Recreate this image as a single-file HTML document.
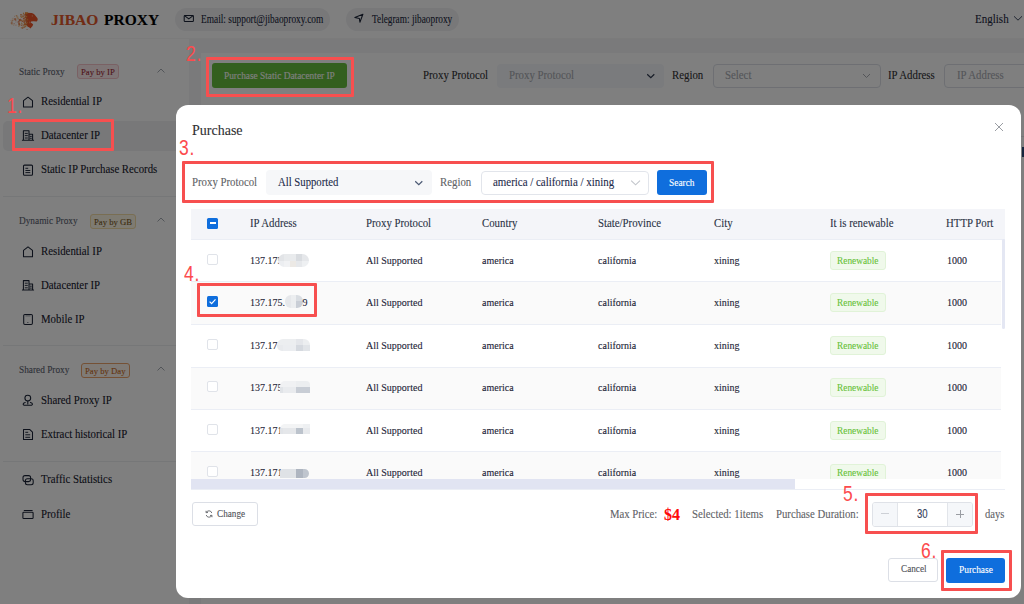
<!DOCTYPE html>
<html><head><meta charset="utf-8">
<style>
*{box-sizing:border-box;margin:0;padding:0}
html,body{width:1024px;height:604px;overflow:hidden;background:#fff;font-family:"Liberation Serif",serif;color:#1f2937}
.a,.item,.th,.td,.grp{-webkit-text-stroke:0.1px currentColor}
.a{position:absolute;white-space:nowrap;line-height:1}
#hdr{position:absolute;left:0;top:0;width:1024px;height:39px;background:#fff;border-bottom:1px solid #f6f6f6}
.pill{position:absolute;top:8px;height:23px;border-radius:12px;background:#f0f1f3}
#side{position:absolute;left:0;top:39px;width:189px;height:565px;background:#fff}
.grp{font-size:9.3px;color:#5b6270}
.badge{position:absolute;height:15px;border-radius:3px}
.item{left:41px;font-size:11.5px;color:#18202e;transform:scaleX(0.939);transform-origin:0 0}
.sep{position:absolute;left:3px;width:183px;height:1px;background:#eceef1}
.sic{position:absolute;left:21px}
#main{position:absolute;left:189px;top:39px;width:835px;height:565px;background:#f4f5f6}
#card{position:absolute;left:201px;top:53px;width:823px;height:551px;background:#fff}
#overlay{position:absolute;left:0;top:0;width:1024px;height:604px;background:rgba(0,0,0,0.5)}
#modal{position:absolute;left:176px;top:105px;width:845px;height:493px;background:#fff;border-radius:12px;overflow:hidden}
.red{position:absolute;border:3px solid #f74f4f;border-radius:1px}
.num{position:absolute;color:#fc4b4d;font-family:"Liberation Sans",sans-serif;font-size:21.6px;line-height:1;white-space:nowrap;transform:scaleX(0.81);transform-origin:0 0;letter-spacing:1px}
.th{font-size:11.5px;color:#2b3345;transform:scaleX(0.939);transform-origin:0 0}
.td{font-size:10px;color:#1c2436}
.row{position:absolute;left:15px;width:811px;height:43px;border-bottom:1px solid #ebeef5}
.cb{position:absolute;left:31px;width:11px;height:11px;border:1px solid #e0e3e9;border-radius:2px;background:#fff}
.tag{position:absolute;left:654px;width:56px;height:19px;background:#f0f9eb;border:1px solid #e1f3d8;border-radius:3px}
.blur{position:absolute;height:12px;border-radius:6px}
</style></head><body>
<div id="hdr">
  <div class="a" style="left:51px;top:12px;font-size:15.5px;font-weight:bold;color:#e2582a">JIBAO</div>
  <div class="a" style="left:104px;top:12px;font-size:15.5px;font-weight:bold;color:#000">PROXY</div>
  <div class="pill" style="left:175px;width:155px"></div>
  <div class="a" style="left:201px;top:14.4px;font-size:11.5px;transform:scaleX(0.8130);transform-origin:0 0;color:#1d2740">Email: support@jibaoproxy.com</div>
  <div class="pill" style="left:346px;width:113px"></div>
  <div class="a" style="left:372px;top:14.4px;font-size:11.5px;transform:scaleX(0.8087);transform-origin:0 0;color:#1d2740">Telegram: jibaoproxy</div>
  <div class="a" style="left:975px;top:13.6px;font-size:11.5px;transform:scaleX(0.957);transform-origin:0 0;color:#1d2740">English</div>
  <svg class="a" style="left:1013px;top:15px" width="10" height="7" viewBox="0 0 10 7"><path d="M1 1.3 L5 5.2 L9 1.3" fill="none" stroke="#2a3550" stroke-width="0.9"/></svg>
</div>

<div id="side">
  <div class="a grp" style="left:19px;top:29px">Static Proxy</div>
  <div class="badge" style="left:77px;top:25px;width:42px;background:#fdebed;border:1px solid #f5c2c8"></div>
  <div class="a" style="left:81px;top:29px;font-size:8.7px;color:#9e2a35">Pay by IP</div>
  <svg class="a" style="left:157px;top:29px" width="8" height="5" viewBox="0 0 8 5"><path d="M0.5 4.5 L4 1 L7.5 4.5" fill="none" stroke="#9aa0aa" stroke-width="0.9"/></svg>
  <div class="a item" style="top:57px">Residential IP</div>

  <div class="a" style="left:3px;top:82px;width:183px;height:30px;background:#f0f1f3;border-radius:5px"></div>
  <div class="a item" style="top:91px">Datacenter IP</div>
  <div class="a item" style="top:125px">Static IP Purchase Records</div>

  <div class="sep" style="top:157px"></div>
  <div class="a grp" style="left:19px;top:178px">Dynamic Proxy</div>
  <div class="badge" style="left:90px;top:175px;width:46px;background:#fdf6e4;border:1px solid #f3dca6"></div>
  <div class="a" style="left:94px;top:179px;font-size:8.7px;color:#7a5a1e">Pay by GB</div>
  <svg class="a" style="left:157px;top:178px" width="8" height="5" viewBox="0 0 8 5"><path d="M0.5 4.5 L4 1 L7.5 4.5" fill="none" stroke="#9aa0aa" stroke-width="0.9"/></svg>
  <div class="a item" style="top:207px">Residential IP</div>
  <div class="a item" style="top:241px">Datacenter IP</div>
  <div class="a item" style="top:275px">Mobile IP</div>

  <div class="sep" style="top:306px"></div>
  <div class="a grp" style="left:19px;top:327px">Shared Proxy</div>
  <div class="badge" style="left:81px;top:324px;width:49px;background:#fff7ef;border:1px solid #eba26a"></div>
  <div class="a" style="left:85px;top:328px;font-size:8.7px;color:#c86a22">Pay by Day</div>
  <svg class="a" style="left:157px;top:327px" width="8" height="5" viewBox="0 0 8 5"><path d="M0.5 4.5 L4 1 L7.5 4.5" fill="none" stroke="#9aa0aa" stroke-width="0.9"/></svg>
  <div class="a item" style="top:356px">Shared Proxy IP</div>
  <div class="a item" style="top:390px">Extract historical IP</div>

  <div class="sep" style="top:422px"></div>
  <div class="a item" style="top:435px">Traffic Statistics</div>
  <div class="a item" style="top:470px">Profile</div>
</div>

<div id="main"></div>
<div id="card">
  <div class="a" style="left:11px;top:10.4px;width:135px;height:24.6px;background:#66bf3c;border-radius:3px"></div>
  <div class="a" style="left:23px;top:19px;font-size:9.35px;color:#fff">Purchase Static Datacenter IP</div>
  <div class="a" style="left:222px;top:17.3px;font-size:11.5px;transform:scaleX(0.9391);transform-origin:0 0;color:#303133">Proxy Protocol</div>
  <div class="a" style="left:296px;top:11px;width:167px;height:24px;background:#f5f7fa;border-radius:4px"></div>
  <div class="a" style="left:308px;top:17.3px;font-size:11.5px;transform:scaleX(0.9391);transform-origin:0 0;color:#a8abb2">Proxy Protocol</div>
  <svg class="a" style="left:446px;top:20px" width="8" height="6" viewBox="0 0 8 6"><path d="M0.2 1.3 L3.8 4.7 L7.3 1.3" fill="none" stroke="#303a50" stroke-width="1.25"/></svg>
  <div class="a" style="left:471px;top:17.3px;font-size:11.5px;transform:scaleX(0.9391);transform-origin:0 0;color:#303133">Region</div>
  <div class="a" style="left:512px;top:11px;width:168px;height:24px;border:1px solid #dcdfe6;border-radius:4px"></div>
  <div class="a" style="left:524px;top:17.3px;font-size:11.5px;transform:scaleX(0.9391);transform-origin:0 0;color:#a8abb2">Select</div>
  <svg class="a" style="left:661px;top:20px" width="9" height="6" viewBox="0 0 9 6"><path d="M1 1 L4.5 4.5 L8 1" fill="none" stroke="#a8abb2" stroke-width="1"/></svg>
  <div class="a" style="left:687px;top:17.3px;font-size:11.5px;transform:scaleX(0.9391);transform-origin:0 0;color:#303133">IP Address</div>
  <div class="a" style="left:743px;top:11px;width:100px;height:24px;border:1px solid #dcdfe6;border-radius:4px"></div>
  <div class="a" style="left:820px;top:83px;width:4px;height:1px;background:#e6e8ec"></div>
  <div class="a" style="left:821px;top:94px;width:3px;height:10px;background:#2b4a7a"></div>
  <div class="a" style="left:756px;top:17.3px;font-size:11.5px;transform:scaleX(0.9391);transform-origin:0 0;color:#a8abb2">IP Address</div>
</div>


<svg class="a" style="left:0;top:0" width="400" height="604" viewBox="0 0 400 604">
 <g fill="none" stroke="#1a2336" stroke-width="1.05" stroke-linejoin="round" stroke-linecap="round">
  <!-- mail -->
  <rect x="184.2" y="15.4" width="9.2" height="6.1" rx="0.8"/>
  <path d="M184.8 15.8 L188.8 18.9 L192.8 15.8"/>
  <!-- telegram -->
  <path d="M362.9 14.3 L354.8 17.4 L359.4 18.5 L359.9 22.2 Z"/>
  <!-- house 1 -->
  <path d="M23.5 107 L23.5 100.6 L28 97.2 L32.5 100.6 L32.5 107 Z"/>
  <!-- building 1 -->
  <path d="M23.4 140.2 L23.4 130.8 L29 130.8 L29 140.2 M29 134.2 L32.6 134.2 L32.6 140.2 M22.4 140.2 L33.6 140.2"/>
  <path d="M25.2 133.4 L27.4 133.4 M25.2 135.6 L27.4 135.6 M25.2 138 L27.4 138 M30.1 136.4 L31.4 136.4 M30.1 138.3 L31.4 138.3" stroke-width="0.9"/>
  <!-- doc records -->
  <rect x="23.5" y="165.1" width="9" height="10.1" rx="1"/>
  <path d="M25.8 168.3 L27.8 168.3 M25.8 170.5 L29.9 170.5 M25.8 172.6 L29.9 172.6" stroke-width="0.95"/>
  <!-- house 2 -->
  <path d="M23.5 256.7 L23.5 250.3 L28 246.9 L32.5 250.3 L32.5 256.7 Z"/>
  <!-- building 2 -->
  <path d="M23.4 290 L23.4 280.6 L29 280.6 L29 290 M29 284 L32.6 284 L32.6 290 M22.4 290 L33.6 290"/>
  <path d="M25.2 283.2 L27.4 283.2 M25.2 285.4 L27.4 285.4 M25.2 287.8 L27.4 287.8 M30.1 286.2 L31.4 286.2 M30.1 288.1 L31.4 288.1" stroke-width="0.9"/>
  <!-- mobile -->
  <rect x="23.7" y="314.4" width="8.7" height="10" rx="1.2"/>
  <path d="M25.8 315.9 L30.2 315.9" stroke-width="0.8" opacity="0.6"/>
  <circle cx="27.9" cy="322.4" r="0.5" fill="#1a2336" stroke="none"/>
  <!-- person pin -->
  <circle cx="27.8" cy="398.1" r="2.9"/>
  <path d="M27.8 401 L27.8 404"/>
  <path d="M25.2 402.4 C22.5 402.9 22.6 405.2 24.8 405.3 L30.8 405.3 C33 405.2 33.1 402.9 30.4 402.4"/>
  <!-- doc fold -->
  <path d="M23.5 429.4 L29.6 429.4 L32.5 432.2 L32.5 439.4 L23.5 439.4 Z"/>
  <path d="M25.7 432.3 L27.8 432.3 M25.7 434.8 L29.8 434.8 M25.7 437.3 L29.8 437.3" stroke-width="0.95"/>
  <!-- traffic -->
  <rect x="23" y="475.6" width="7.6" height="6" rx="2"/>
  <rect x="25.4" y="478.7" width="7.8" height="6" rx="2"/>
  <!-- profile -->
  <path d="M24.2 510.4 L32.2 510.4"/>
  <rect x="22.9" y="512.3" width="10.2" height="6.2" rx="0.8"/>
 </g>
 <!-- tiger -->
 <g transform="translate(10 8)">
  <path d="M15.2 4.8 L21.9 5.0 C23.5 5.6 24.6 6.5 25.3 7.6 L27.5 10.3 L27.7 11.9 L26.7 13.4 L23.5 13.2 L21 13.6 L20.6 14.6 L22.2 15.6 L23.2 16.6 L22.4 18.2 L21.2 19.6 L20.6 20.4 L19.4 19.6 L17.9 18.7 L16.6 17.4 L17 16 L15.8 14.8 L16.6 13.4 L15.4 12.2 L16.2 10.6 L15 9.2 L15.9 7.8 L14.8 6.4 Z" fill="#ec5428"/>
  <circle cx="22.3" cy="7.9" r="0.6" fill="#f5b090"/>
  <path d="M19.5 13.6 L19.7 15.4" stroke="#f5b090" stroke-width="0.6"/>
  <rect x="15.7" y="12.3" width="1.7" height="1.7" fill="#e8733a" opacity="0.85"/>
  <rect x="11.8" y="19.3" width="1.5" height="1.5" fill="#e8733a" opacity="0.72"/>
  <rect x="1.1" y="15.1" width="1.7" height="1.7" fill="#f0923c" opacity="0.34"/>
  <rect x="13.2" y="13.6" width="1.1" height="1.1" fill="#e8733a" opacity="0.77"/>
  <rect x="10.9" y="14.5" width="1.5" height="1.5" fill="#f2a44c" opacity="0.68"/>
  <rect x="15.8" y="8.0" width="1.1" height="1.1" fill="#f2a44c" opacity="0.86"/>
  <rect x="1.8" y="10.5" width="0.9" height="0.9" fill="#f0923c" opacity="0.36"/>
  <rect x="14.4" y="7.5" width="0.9" height="0.9" fill="#e4622e" opacity="0.81"/>
  <rect x="5.7" y="7.0" width="1.5" height="1.5" fill="#f0923c" opacity="0.50"/>
  <rect x="16.7" y="10.8" width="1.5" height="1.5" fill="#f0923c" opacity="0.89"/>
  <rect x="16.6" y="21.0" width="0.9" height="0.9" fill="#e8733a" opacity="0.88"/>
  <rect x="10.2" y="6.0" width="1.1" height="1.1" fill="#e8733a" opacity="0.66"/>
  <rect x="7.5" y="13.5" width="1.3" height="1.3" fill="#e4622e" opacity="0.56"/>
  <rect x="1.2" y="12.8" width="1.1" height="1.1" fill="#f0923c" opacity="0.34"/>
  <rect x="10.2" y="11.6" width="1.7" height="1.7" fill="#e4622e" opacity="0.66"/>
  <rect x="14.2" y="10.4" width="1.1" height="1.1" fill="#f2a44c" opacity="0.80"/>
  <rect x="15.4" y="7.9" width="1.1" height="1.1" fill="#e8733a" opacity="0.85"/>
  <rect x="15.0" y="10.9" width="0.9" height="0.9" fill="#f0923c" opacity="0.83"/>
  <rect x="10.1" y="7.8" width="0.9" height="0.9" fill="#e8733a" opacity="0.66"/>
  <rect x="14.5" y="8.6" width="1.1" height="1.1" fill="#f0923c" opacity="0.81"/>
  <rect x="4.2" y="10.1" width="1.7" height="1.7" fill="#e8733a" opacity="0.45"/>
  <rect x="1.6" y="11.8" width="1.3" height="1.3" fill="#e8733a" opacity="0.36"/>
  <rect x="8.1" y="9.9" width="0.9" height="0.9" fill="#f0923c" opacity="0.58"/>
  <rect x="10.2" y="6.3" width="1.3" height="1.3" fill="#f2a44c" opacity="0.66"/>
  <rect x="2.3" y="11.8" width="1.3" height="1.3" fill="#f0923c" opacity="0.38"/>
  <rect x="15.3" y="15.6" width="1.3" height="1.3" fill="#f2a44c" opacity="0.84"/>
  <rect x="16.1" y="12.2" width="0.9" height="0.9" fill="#e4622e" opacity="0.87"/>
  <rect x="6.4" y="7.4" width="0.9" height="0.9" fill="#f0923c" opacity="0.53"/>
  <rect x="16.9" y="16.3" width="1.5" height="1.5" fill="#e4622e" opacity="0.90"/>
  <rect x="8.2" y="14.6" width="1.5" height="1.5" fill="#e4622e" opacity="0.59"/>
  <rect x="4.3" y="10.2" width="1.7" height="1.7" fill="#e8733a" opacity="0.45"/>
  <rect x="8.5" y="11.0" width="1.3" height="1.3" fill="#e8733a" opacity="0.60"/>
  <rect x="12.8" y="7.8" width="1.1" height="1.1" fill="#f2a44c" opacity="0.75"/>
  <rect x="3.6" y="10.8" width="0.9" height="0.9" fill="#f0923c" opacity="0.43"/>
  <rect x="16.2" y="6.4" width="1.5" height="1.5" fill="#e4622e" opacity="0.87"/>
  <rect x="4.7" y="11.3" width="1.7" height="1.7" fill="#e4622e" opacity="0.47"/>
  <rect x="14.3" y="9.3" width="0.9" height="0.9" fill="#f2a44c" opacity="0.81"/>
  <rect x="14.8" y="15.7" width="1.7" height="1.7" fill="#f2a44c" opacity="0.82"/>
  <rect x="0.3" y="11.9" width="0.9" height="0.9" fill="#f2a44c" opacity="0.31"/>
  <rect x="4.0" y="7.8" width="0.9" height="0.9" fill="#e4622e" opacity="0.44"/>
  <rect x="10.9" y="6.3" width="1.1" height="1.1" fill="#e8733a" opacity="0.68"/>
  <rect x="14.0" y="15.6" width="1.5" height="1.5" fill="#f0923c" opacity="0.79"/>
  <rect x="12.9" y="16.7" width="1.1" height="1.1" fill="#f0923c" opacity="0.75"/>
  <rect x="11.1" y="16.7" width="1.3" height="1.3" fill="#e4622e" opacity="0.69"/>
  <rect x="6.6" y="10.1" width="1.3" height="1.3" fill="#f2a44c" opacity="0.53"/>
  <rect x="15.5" y="9.6" width="0.9" height="0.9" fill="#f0923c" opacity="0.85"/>
  <rect x="13.1" y="4.9" width="0.9" height="0.9" fill="#e4622e" opacity="0.76"/>
  <rect x="13.6" y="9.6" width="1.1" height="1.1" fill="#e4622e" opacity="0.78"/>
  <rect x="9.0" y="15.1" width="1.1" height="1.1" fill="#f2a44c" opacity="0.62"/>
  <rect x="16.5" y="13.5" width="1.1" height="1.1" fill="#e4622e" opacity="0.88"/>
  <rect x="9.1" y="13.6" width="0.9" height="0.9" fill="#f0923c" opacity="0.62"/>
  <rect x="8.8" y="16.0" width="1.7" height="1.7" fill="#f0923c" opacity="0.61"/>
  <rect x="15.7" y="11.7" width="1.1" height="1.1" fill="#f2a44c" opacity="0.85"/>
  <rect x="15.3" y="9.1" width="1.1" height="1.1" fill="#e4622e" opacity="0.84"/>
  <rect x="5.5" y="13.5" width="0.9" height="0.9" fill="#e4622e" opacity="0.49"/>
  <rect x="12.4" y="12.4" width="1.3" height="1.3" fill="#e8733a" opacity="0.74"/>
  <rect x="14.0" y="12.8" width="1.7" height="1.7" fill="#e8733a" opacity="0.80"/>
  <rect x="5.4" y="16.6" width="1.1" height="1.1" fill="#e8733a" opacity="0.49"/>
  <rect x="15.1" y="7.8" width="0.9" height="0.9" fill="#f2a44c" opacity="0.83"/>
  <rect x="16.0" y="15.8" width="1.1" height="1.1" fill="#e4622e" opacity="0.86"/>
  <rect x="10.8" y="19.2" width="1.1" height="1.1" fill="#f0923c" opacity="0.68"/>
  <rect x="8.2" y="15.4" width="1.7" height="1.7" fill="#e4622e" opacity="0.59"/>
  <rect x="2.5" y="9.7" width="1.1" height="1.1" fill="#f2a44c" opacity="0.39"/>
  <rect x="15.8" y="4.7" width="1.5" height="1.5" fill="#f0923c" opacity="0.86"/>
  <rect x="13.0" y="11.7" width="1.7" height="1.7" fill="#f2a44c" opacity="0.76"/>
  <rect x="14.4" y="11.5" width="1.3" height="1.3" fill="#e4622e" opacity="0.81"/>
  <rect x="15.7" y="5.3" width="0.9" height="0.9" fill="#f2a44c" opacity="0.85"/>
  <rect x="15.2" y="15.6" width="1.5" height="1.5" fill="#e8733a" opacity="0.84"/>
  <rect x="13.7" y="18.7" width="1.1" height="1.1" fill="#e4622e" opacity="0.78"/>
  <rect x="9.2" y="11.3" width="1.1" height="1.1" fill="#e4622e" opacity="0.62"/>
  <rect x="3.5" y="15.0" width="1.3" height="1.3" fill="#e4622e" opacity="0.42"/>
  <rect x="16.8" y="4.1" width="1.3" height="1.3" fill="#f2a44c" opacity="0.89"/>
  <rect x="9.7" y="10.7" width="1.5" height="1.5" fill="#e8733a" opacity="0.64"/>
  <rect x="16.7" y="14.3" width="1.1" height="1.1" fill="#f2a44c" opacity="0.89"/>
  <rect x="12.9" y="4.7" width="1.3" height="1.3" fill="#f2a44c" opacity="0.76"/>
  <rect x="9.2" y="12.5" width="0.9" height="0.9" fill="#e4622e" opacity="0.62"/>
  <rect x="13.8" y="13.8" width="0.9" height="0.9" fill="#e4622e" opacity="0.79"/>
  <rect x="15.8" y="11.7" width="1.1" height="1.1" fill="#e4622e" opacity="0.86"/>
  <rect x="8.2" y="17.5" width="1.3" height="1.3" fill="#f0923c" opacity="0.59"/>
  <rect x="0.7" y="14.1" width="1.5" height="1.5" fill="#f0923c" opacity="0.33"/>
  <rect x="15.3" y="4.6" width="1.3" height="1.3" fill="#f0923c" opacity="0.84"/>
  <rect x="13.6" y="15.7" width="1.3" height="1.3" fill="#e8733a" opacity="0.78"/>
  <rect x="0.8" y="14.5" width="1.5" height="1.5" fill="#e8733a" opacity="0.33"/>
  <rect x="16.6" y="14.0" width="0.9" height="0.9" fill="#f0923c" opacity="0.89"/>
  <rect x="10.6" y="8.1" width="0.9" height="0.9" fill="#f2a44c" opacity="0.67"/>
  <rect x="9.0" y="11.5" width="1.5" height="1.5" fill="#e4622e" opacity="0.62"/>
  <rect x="11.6" y="15.7" width="1.1" height="1.1" fill="#f2a44c" opacity="0.71"/>
  <rect x="12.5" y="6.4" width="1.3" height="1.3" fill="#f2a44c" opacity="0.74"/>
  <rect x="12.3" y="7.6" width="1.3" height="1.3" fill="#e8733a" opacity="0.74"/>
  <rect x="3.2" y="16.6" width="1.1" height="1.1" fill="#f0923c" opacity="0.41"/>
  <rect x="10.7" y="8.9" width="0.9" height="0.9" fill="#f0923c" opacity="0.68"/>
  <rect x="1.2" y="13.6" width="1.7" height="1.7" fill="#e8733a" opacity="0.34"/>
  <rect x="10.7" y="11.9" width="1.1" height="1.1" fill="#f2a44c" opacity="0.68"/>
  <rect x="14.3" y="6.0" width="1.7" height="1.7" fill="#e8733a" opacity="0.80"/>
  <rect x="6.6" y="8.3" width="1.7" height="1.7" fill="#f2a44c" opacity="0.53"/>
  <rect x="14.0" y="14.7" width="1.7" height="1.7" fill="#f0923c" opacity="0.80"/>
  <rect x="7.9" y="12.7" width="1.5" height="1.5" fill="#e4622e" opacity="0.58"/>
  <rect x="13.9" y="17.4" width="0.9" height="0.9" fill="#f0923c" opacity="0.79"/>
  <rect x="11.7" y="12.6" width="1.3" height="1.3" fill="#e4622e" opacity="0.71"/>
  <rect x="15.9" y="7.9" width="1.3" height="1.3" fill="#f2a44c" opacity="0.86"/>
  <rect x="12.6" y="10.5" width="1.1" height="1.1" fill="#e8733a" opacity="0.74"/>
  <rect x="15.0" y="4.2" width="1.7" height="1.7" fill="#f0923c" opacity="0.83"/>
  <rect x="16.4" y="17.6" width="0.9" height="0.9" fill="#f2a44c" opacity="0.88"/>
  <rect x="13.4" y="5.6" width="0.9" height="0.9" fill="#f2a44c" opacity="0.77"/>
  <rect x="11.0" y="8.2" width="1.7" height="1.7" fill="#f2a44c" opacity="0.69"/>
  <rect x="13.0" y="9.7" width="1.3" height="1.3" fill="#e8733a" opacity="0.76"/>
  <rect x="12.3" y="18.4" width="1.5" height="1.5" fill="#f2a44c" opacity="0.73"/>
  <rect x="14.5" y="17.7" width="1.5" height="1.5" fill="#f0923c" opacity="0.81"/>
 </g>
</svg>

<div id="overlay"></div>

<div id="modal">
  <div class="a" style="left:16px;top:19px;font-size:14px;color:#303133">Purchase</div>
  <svg class="a" style="left:818px;top:17px" width="10" height="10" viewBox="0 0 10 10"><path d="M1 1 L9 9 M9 1 L1 9" stroke="#9a9da3" stroke-width="1"/></svg>

  <div class="a" style="left:16px;top:72.4px;font-size:11.5px;transform:scaleX(0.9391);transform-origin:0 0;color:#606266">Proxy Protocol</div>
  <div class="a" style="left:90px;top:65px;width:166px;height:25px;background:#f6f7f9;border-radius:4px"></div>
  <div class="a" style="left:102px;top:72.4px;font-size:11.5px;transform:scaleX(0.9304);transform-origin:0 0;color:#1c2a4a">All Supported</div>
  <svg class="a" style="left:239px;top:75px" width="8" height="6" viewBox="0 0 8 6"><path d="M0.2 1.3 L3.8 4.7 L7.3 1.3" fill="none" stroke="#4d5b75" stroke-width="1.25"/></svg>
  <div class="a" style="left:264px;top:72.4px;font-size:11.5px;transform:scaleX(0.9391);transform-origin:0 0;color:#606266">Region</div>
  <div class="a" style="left:305px;top:65.5px;width:168px;height:24px;border:1px solid #e2e5eb;border-radius:4px"></div>
  <div class="a" style="left:317px;top:72.4px;font-size:11.5px;transform:scaleX(0.948);transform-origin:0 0;color:#1c2a4a">america / california / xining</div>
  <svg class="a" style="left:455px;top:75px" width="10" height="6" viewBox="0 0 10 6"><path d="M0.2 0.6 L4.6 4.8 L9 0.6" fill="none" stroke="#c3c6cc" stroke-width="1.1"/></svg>
  <div class="a" style="left:481px;top:65px;width:50px;height:25px;background:#0f6edd;border-radius:3px"></div>
  <div class="a" style="left:493px;top:73.7px;font-size:9.4px;color:#fff">Search</div>

  <!-- table -->
  <div class="a" style="left:15px;top:104px;width:814px;height:31px;background:#f4f5f9;border-bottom:1px solid #ebeef5"></div>
  <div class="a" style="left:31px;top:112.5px;width:11px;height:11px;background:#0f6edd;border-radius:1.5px"></div>
  <div class="a" style="left:33.5px;top:117.3px;width:6px;height:1.6px;background:#fff"></div>
  <div class="a th" style="left:74px;top:112.9px">IP Address</div>
  <div class="a th" style="left:190px;top:112.9px">Proxy Protocol</div>
  <div class="a th" style="left:306px;top:112.9px">Country</div>
  <div class="a th" style="left:422px;top:112.9px">State/Province</div>
  <div class="a th" style="left:538px;top:112.9px">City</div>
  <div class="a th" style="left:654px;top:112.9px">It is renewable</div>
  <div class="a th" style="left:770px;top:112.9px">HTTP Port</div>

  <!--ROWS--><div class="a" style="left:0;top:0;width:845px;height:374.4px;overflow:hidden">
<div class="a" style="left:15px;top:135.0px;width:810px;height:42.0px;background:#fff;border-bottom:1px solid #ebeef5"></div>
<div class="cb" style="top:148.9px"></div>
<div class="a td" style="left:74px;top:151.0px">137.175</div>
<div class="blur" style="left:102.3px;top:149.0px;width:30.3px;height:13.0px;border-radius:6.5px;overflow:hidden"><i style="position:absolute;left:0px;top:0px;width:6px;height:6.5px;background:#e2e4e7"></i><i style="position:absolute;left:6px;top:0px;width:6px;height:6.5px;background:#e8eaec"></i><i style="position:absolute;left:12px;top:0px;width:6px;height:6.5px;background:#e9ebed"></i><i style="position:absolute;left:18px;top:0px;width:6px;height:6.5px;background:#d9dce0"></i><i style="position:absolute;left:24px;top:0px;width:7px;height:6.5px;background:#e5e7ea"></i><i style="position:absolute;left:0px;top:6.5px;width:6px;height:6.5px;background:#eceef1"></i><i style="position:absolute;left:6px;top:6.5px;width:6px;height:6.5px;background:#f1f2f4"></i><i style="position:absolute;left:12px;top:6.5px;width:6px;height:6.5px;background:#ece9e5"></i><i style="position:absolute;left:18px;top:6.5px;width:6px;height:6.5px;background:#e6e8eb"></i><i style="position:absolute;left:24px;top:6.5px;width:7px;height:6.5px;background:#eef0f2"></i></div>
<div class="a td" style="left:190px;top:151.0px">All Supported</div>
<div class="a td" style="left:306px;top:151.0px">america</div>
<div class="a td" style="left:422px;top:151.0px">california</div>
<div class="a td" style="left:538px;top:151.0px">xining</div>
<div class="tag" style="top:146.1px"></div>
<div class="a" style="left:661px;top:152.0px;font-size:9.35px;color:#67c23a">Renewable</div>
<div class="a td" style="left:771px;top:151.0px">1000</div>
<div class="a" style="left:15px;top:177.0px;width:810px;height:43.0px;background:#fafafa;border-bottom:1px solid #ebeef5"></div>
<div class="a" style="left:31px;top:191.1px;width:11px;height:11px;background:#0f6edd;border-radius:1.5px"></div>
<svg class="a" style="left:31px;top:191.1px" width="11" height="11" viewBox="0 0 11 11"><path d="M2.6 5.6 L4.6 7.6 L8.5 3.4" fill="none" stroke="#fff" stroke-width="1.2"/></svg>
<div class="a td" style="left:74px;top:193.2px">137.175.</div>
<div class="blur" style="left:109.2px;top:190.2px;width:17.4px;height:12.4px;border-radius:6px;overflow:hidden"><i style="position:absolute;left:0px;top:0px;width:6px;height:12.4px;background:#e6e8eb"></i><i style="position:absolute;left:6px;top:0px;width:5px;height:12.4px;background:#eceef0"></i><i style="position:absolute;left:11px;top:0px;width:6.399999999999999px;height:6px;background:#d9dde2"></i><i style="position:absolute;left:11px;top:6px;width:6.399999999999999px;height:6.4px;background:#c9ced6"></i></div>
<div class="a td" style="left:126.5px;top:193.2px">9</div>
<div class="a td" style="left:190px;top:193.2px">All Supported</div>
<div class="a td" style="left:306px;top:193.2px">america</div>
<div class="a td" style="left:422px;top:193.2px">california</div>
<div class="a td" style="left:538px;top:193.2px">xining</div>
<div class="tag" style="top:188.3px"></div>
<div class="a" style="left:661px;top:194.2px;font-size:9.35px;color:#67c23a">Renewable</div>
<div class="a td" style="left:771px;top:193.2px">1000</div>
<div class="a" style="left:15px;top:220.0px;width:810px;height:43.0px;background:#fff;border-bottom:1px solid #ebeef5"></div>
<div class="cb" style="top:233.8px"></div>
<div class="a td" style="left:74px;top:235.9px">137.17</div>
<div class="blur" style="left:101.4px;top:234.0px;width:32.3px;height:11.9px;border-radius:6px 6px 0 5px;overflow:hidden"><i style="position:absolute;left:0px;top:0px;width:19px;height:6px;background:#eceef0"></i><i style="position:absolute;left:19px;top:0px;width:7px;height:6px;background:#e4e6ea"></i><i style="position:absolute;left:26px;top:0px;width:7px;height:6px;background:#eceef0"></i><i style="position:absolute;left:0px;top:6px;width:6px;height:6px;background:#e8eaed"></i><i style="position:absolute;left:6px;top:6px;width:13px;height:6px;background:#ebedf0"></i><i style="position:absolute;left:19px;top:6px;width:7px;height:6px;background:#d5d9df"></i><i style="position:absolute;left:26px;top:6px;width:7px;height:6px;background:#e1e4e8"></i></div>
<div class="a td" style="left:190px;top:235.9px">All Supported</div>
<div class="a td" style="left:306px;top:235.9px">america</div>
<div class="a td" style="left:422px;top:235.9px">california</div>
<div class="a td" style="left:538px;top:235.9px">xining</div>
<div class="tag" style="top:231.0px"></div>
<div class="a" style="left:661px;top:236.9px;font-size:9.35px;color:#67c23a">Renewable</div>
<div class="a td" style="left:771px;top:235.9px">1000</div>
<div class="a" style="left:15px;top:263.0px;width:810px;height:42.0px;background:#fafafa;border-bottom:1px solid #ebeef5"></div>
<div class="cb" style="top:276.2px"></div>
<div class="a td" style="left:74px;top:278.2px">137.175</div>
<div class="blur" style="left:104.0px;top:275.7px;width:29.7px;height:11.9px;border-radius:5px 4px 0 0;overflow:hidden"><i style="position:absolute;left:0px;top:0px;width:16px;height:6px;background:#f0f1f3"></i><i style="position:absolute;left:16px;top:0px;width:14px;height:6px;background:#eceef0"></i><i style="position:absolute;left:0px;top:6px;width:3px;height:6px;background:#e0e3e7"></i><i style="position:absolute;left:3px;top:6px;width:13px;height:6px;background:#e9ebee"></i><i style="position:absolute;left:16px;top:6px;width:14px;height:6px;background:#c8cdd5"></i></div>
<div class="a td" style="left:190px;top:278.2px">All Supported</div>
<div class="a td" style="left:306px;top:278.2px">america</div>
<div class="a td" style="left:422px;top:278.2px">california</div>
<div class="a td" style="left:538px;top:278.2px">xining</div>
<div class="tag" style="top:273.4px"></div>
<div class="a" style="left:661px;top:279.2px;font-size:9.35px;color:#67c23a">Renewable</div>
<div class="a td" style="left:771px;top:278.2px">1000</div>
<div class="a" style="left:15px;top:305.0px;width:810px;height:42.0px;background:#fff;border-bottom:1px solid #ebeef5"></div>
<div class="cb" style="top:318.5px"></div>
<div class="a td" style="left:74px;top:320.6px">137.171</div>
<div class="blur" style="left:104.0px;top:319.0px;width:29.7px;height:10.4px;border-radius:5px 0 0 0;overflow:hidden"><i style="position:absolute;left:0px;top:0px;width:23px;height:4px;background:#f3f4f5"></i><i style="position:absolute;left:23px;top:0px;width:7px;height:4px;background:#eef0f2"></i><i style="position:absolute;left:0px;top:4px;width:3px;height:6.4px;background:#e1e4e8"></i><i style="position:absolute;left:3px;top:4px;width:13px;height:6.4px;background:#e5e7ea"></i><i style="position:absolute;left:16px;top:4px;width:7px;height:6.4px;background:#bcc3cc"></i><i style="position:absolute;left:23px;top:4px;width:7px;height:6.4px;background:#e8eaed"></i></div>
<div class="a td" style="left:190px;top:320.6px">All Supported</div>
<div class="a td" style="left:306px;top:320.6px">america</div>
<div class="a td" style="left:422px;top:320.6px">california</div>
<div class="a td" style="left:538px;top:320.6px">xining</div>
<div class="tag" style="top:315.7px"></div>
<div class="a" style="left:661px;top:321.6px;font-size:9.35px;color:#67c23a">Renewable</div>
<div class="a td" style="left:771px;top:320.6px">1000</div>
<div class="a" style="left:15px;top:347.0px;width:810px;height:28.0px;background:#fafafa;border-bottom:1px solid #ebeef5"></div>
<div class="cb" style="top:361.0px"></div>
<div class="a td" style="left:74px;top:363.4px">137.171</div>
<div class="blur" style="left:104.0px;top:363.7px;width:28.7px;height:8.9px;border-radius:3px 5px 5px 0;overflow:hidden"><i style="position:absolute;left:0px;top:0px;width:16px;height:9px;background:#dfe2e6"></i><i style="position:absolute;left:16px;top:0px;width:7px;height:9px;background:#aeb5c0"></i><i style="position:absolute;left:23px;top:0px;width:6px;height:9px;background:#bfc5ce"></i></div>
<div class="a td" style="left:190px;top:363.4px">All Supported</div>
<div class="a td" style="left:306px;top:363.4px">america</div>
<div class="a td" style="left:422px;top:363.4px">california</div>
<div class="a td" style="left:538px;top:363.4px">xining</div>
<div class="tag" style="top:358.5px"></div>
<div class="a" style="left:661px;top:364.4px;font-size:9.35px;color:#67c23a">Renewable</div>
<div class="a td" style="left:771px;top:363.4px">1000</div>
</div><!--/ROWS-->

  <!-- scrollbars -->
  <div class="a" style="left:15px;top:374px;width:604px;height:10px;background:#e1e4f2"></div>
  <div class="a" style="left:15px;top:384px;width:814px;height:1px;background:#ebeef5"></div>
  <div class="a" style="left:826px;top:134px;width:3px;height:90px;background:#e4e7f3;border-radius:1.5px"></div>

  <!-- footer -->
  <div class="a" style="left:16px;top:397px;width:66px;height:24px;border:1px solid #dcdfe6;border-radius:3px"></div>
  <svg class="a" style="left:29px;top:405px" width="8" height="8" viewBox="0 0 8 8"><path d="M6.8 3 A3 3 0 0 0 1.2 2.5 M1.2 5 A3 3 0 0 0 6.8 5.5" fill="none" stroke="#606266" stroke-width="0.9"/><path d="M1 0.8 L1.2 2.7 L3 2.5 M7 7.2 L6.8 5.3 L5 5.5" fill="none" stroke="#606266" stroke-width="0.9"/></svg>
  <div class="a" style="left:41px;top:405px;font-size:9.5px;transform:scaleX(0.9684);transform-origin:0 0;color:#4f5257">Change</div>

  <div class="a" style="left:434px;top:404.4px;font-size:11.5px;transform:scaleX(0.9304);transform-origin:0 0;color:#606266">Max Price:</div>
  <div class="a" style="left:488px;top:402px;font-size:16px;font-weight:bold;color:#ff0a0a">$4</div>
  <div class="a" style="left:516px;top:404.4px;font-size:11.5px;transform:scaleX(0.9391);transform-origin:0 0;color:#606266">Selected: 1items</div>
  <div class="a" style="left:600px;top:404.4px;font-size:11.5px;transform:scaleX(0.9348);transform-origin:0 0;color:#606266">Purchase Duration:</div>
  <div class="a" style="left:696px;top:397px;width:101px;height:25px;border:1px solid #dfe2e8;border-radius:3px;background:#fff"></div>
  <div class="a" style="left:697px;top:398px;width:25px;height:23px;background:#f5f7fa;border-right:1px solid #e2e5ea;border-radius:2px 0 0 2px"></div>
  <div class="a" style="left:771px;top:398px;width:25px;height:23px;background:#f5f7fa;border-left:1px solid #e2e5ea;border-radius:0 2px 2px 0"></div>
  <div class="a" style="left:705px;top:408px;width:8px;height:1px;background:#cdd0d6"></div>
  <div class="a" style="left:780px;top:408.5px;width:8px;height:1px;background:#9a9da3"></div>
  <div class="a" style="left:783.5px;top:405px;width:1px;height:8px;background:#9a9da3"></div>
  <div class="a" style="left:741px;top:403.4px;font-size:12px;font-family:'Liberation Sans',sans-serif;color:#34405a;transform:scaleX(0.8);transform-origin:0 0">30</div>
  <div class="a" style="left:809px;top:404.4px;font-size:11.5px;transform:scaleX(0.9217);transform-origin:0 0;color:#606266">days</div>

  <div class="a" style="left:712px;top:453px;width:50px;height:24px;border:1px solid #dcdfe6;border-radius:3px"></div>
  <div class="a" style="left:725px;top:460px;font-size:9.5px;transform:scaleX(0.9684);transform-origin:0 0;color:#4f5257">Cancel</div>
  <div class="a" style="left:770px;top:453px;width:59px;height:25px;background:#0f6edd;border-radius:3px"></div>
  <div class="a" style="left:783px;top:461px;font-size:9.4px;color:#fff">Purchase</div>
</div>

<!-- annotations -->
<div class="red" style="left:12px;top:119px;width:102px;height:32px"></div>
<div class="num" style="left:7.2px;top:95.4px">1.</div>
<div class="red" style="left:206px;top:57px;width:148px;height:40px"></div>
<div class="num" style="left:186.2px;top:43.3px">2.</div>
<div class="red" style="left:182px;top:161px;width:532px;height:42px"></div>
<div class="num" style="left:178.6px;top:137.1px">3.</div>
<div class="red" style="left:197px;top:283px;width:120px;height:34px"></div>
<div class="num" style="left:184px;top:263.2px">4.</div>
<div class="red" style="left:865px;top:493px;width:113px;height:41px"></div>
<div class="num" style="left:843.4px;top:482.5px">5.</div>
<div class="red" style="left:941px;top:550px;width:71px;height:41px"></div>
<div class="num" style="left:921.4px;top:539.8px">6.</div>
</body></html>
